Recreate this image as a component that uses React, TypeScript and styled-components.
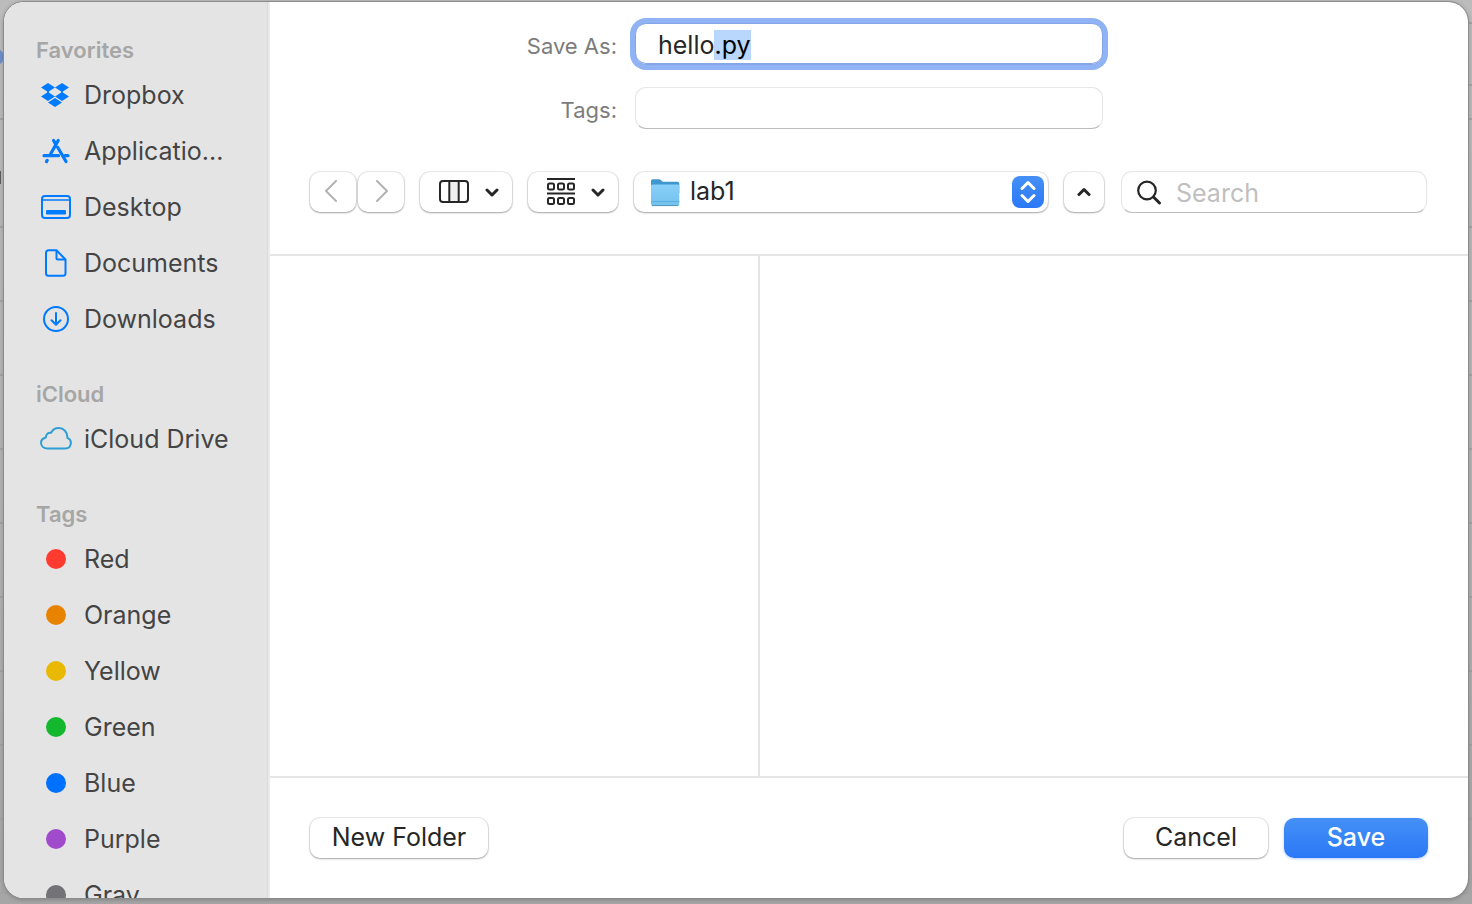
import React, { useEffect, useRef } from "react";
import styled, { createGlobalStyle, css } from "styled-components";

const GlobalStyle = createGlobalStyle`
  *, *::before, *::after { box-sizing: border-box; }
  body { margin: 0; font-family: Inter, "Liberation Sans", sans-serif; font-size: 25px; font-weight: 430; color: #262626; }
  button, input, select { font: inherit; color: inherit; }
`;

const Desktop = styled.div`
  height: 100vh;
  padding: 2px 4px 6px;
  position: relative;
  overflow: hidden;
  background:
    repeating-linear-gradient(to bottom, #a3a3a3 0 2px, transparent 2px 74px) 0 226px no-repeat,
    linear-gradient(#a3a3a3, #a3a3a3) 0 118px / 100% 2px no-repeat,
    linear-gradient(#a3a3a3, #a3a3a3) 100% 84px / 50% 2px no-repeat,
    linear-gradient(#a3a3a3, #a3a3a3) 100% 22px / 50% 2px no-repeat,
    linear-gradient(#5c5c5c, #5c5c5c) 0 171px / 1px 13px no-repeat,
    linear-gradient(to bottom, #bcbcbc, #b3b3b3 60%, #a6a6a6);
`;

const Badge = styled.span`
  position: absolute;
  left: -12px;
  top: 49px;
  width: 16px;
  height: 16px;
  border-radius: 50%;
  background: #6f8fc9;
`;

const Sheet = styled.main`
  position: relative;
  height: 100%;
  display: flex;
  overflow: hidden;
  border-radius: 20px;
  background: #fff;
  box-shadow: 0 0 0 1px #8c8c8c, 0 1px 5px rgba(0, 0, 0, 0.3);
`;

const Sidebar = styled.nav`
  flex: 0 0 266px;
  overflow: hidden;
  padding: 33px 16px 0 32px;
  background: #e4e4e4;
  border-right: 2px solid #ebebeb;
  box-shadow: inset -1px 0 0 #dadada;
`;

const Group = styled.section`
  margin-bottom: 32px;
`;

const GroupTitle = styled.h2`
  margin: 0;
  padding-bottom: 2px;
  font-size: 22px;
  line-height: 30px;
  font-weight: 600;
  color: #a6a6a6;
`;

const List = styled.ul`
  list-style: none;
  margin: 0;
  padding: 0;
`;

const Item = styled.a`
  display: flex;
  align-items: center;
  gap: 8px;
  height: 56px;
  color: #444;
  text-decoration: none;
  white-space: nowrap;
`;

const IconSlot = styled.span`
  flex: 0 0 40px;
  height: 32px;
  display: grid;
  place-items: center;
`;

const Dot = styled.i<{ $color: string }>`
  width: 20px;
  height: 20px;
  border-radius: 50%;
  background: ${(p) => p.$color};
`;

const Content = styled.form`
  flex: 1;
  min-width: 0;
  display: flex;
  flex-direction: column;
`;

const Fields = styled.div`
  display: grid;
  grid-template-columns: 347px 468px;
  column-gap: 18px;
  row-gap: 22px;
  align-items: center;
  padding-top: 21px;
`;

const Label = styled.label`
  padding-top: 4px;
  font-size: 22px;
  font-weight: 400;
  text-align: right;
  color: #7c7c7c;
`;

const raised = css`
  background: #fff;
  border: 0;
  border-radius: 10px;
  box-shadow: 0 0 0 1px rgba(0, 0, 0, 0.08), 0 1px 2px rgba(0, 0, 0, 0.3);
`;

const inset = css`
  border: 1px solid #e6e6e6;
  border-bottom-color: #bdbdbd;
  border-radius: 11px;
  background: #fff;
`;

const TextField = styled.input`
  ${inset}
  width: 100%;
  height: 42px;
  padding: 2px 22px 0;
  outline: none;
  caret-color: transparent;
  &::selection { background: #b9d6fd; color: #000; }
  &:focus {
    border-color: #84a6e6;
    box-shadow: 0 0 0 5px #90b3f5, inset 0 -1px 0 #84a6e6;
  }
`;

const Toolbar = styled.div`
  display: flex;
  align-items: center;
  padding: 42px 41px 41px 40px;
  border-bottom: 2px solid #e5e5e5;
`;

const ToolButton = styled.button<{ $width: number; $menu?: boolean; $after?: number }>`
  ${raised}
  flex: 0 0 ${(p) => p.$width}px;
  height: 40px;
  margin-right: ${(p) => p.$after ?? 16}px;
  padding: ${(p) => (p.$menu ? "0 0 0 6px" : "0")};
  display: flex;
  align-items: center;
  justify-content: center;
  gap: 16px;
`;

const Popup = styled.label`
  ${raised}
  flex: 1 1 414px;
  min-width: 0;
  height: 40px;
  margin-right: 16px;
  padding: 0 4px 0 16px;
  display: flex;
  align-items: center;
  gap: 10px;
`;

const PopupSelect = styled.select`
  flex: 1;
  min-width: 0;
  height: 40px;
  padding: 0 0 2px;
  border: 0;
  appearance: none;
  background: transparent;
`;

const Stepper = styled.span`
  flex: 0 0 32px;
  height: 32px;
  border-radius: 8px;
  background: linear-gradient(#4590f7, #2a78f6);
`;

const SearchBox = styled.label`
  ${inset}
  flex: 0 0 306px;
  min-width: 0;
  height: 42px;
  padding: 2px 14px 0;
  display: flex;
  align-items: center;
  gap: 14px;
`;

const SearchInput = styled.input`
  flex: 1;
  width: 0;
  min-width: 0;
  border: 0;
  padding: 0;
  outline: none;
  background: transparent;
  &::placeholder { color: #bfbfbf; opacity: 1; }
`;

const Columns = styled.div`
  flex: 1;
  display: grid;
  grid-template-columns: 490px 1fr;
`;

const Column = styled.div`
  &:first-child { border-right: 2px solid #e5e5e5; }
`;

const Footer = styled.footer`
  display: flex;
  gap: 16px;
  padding: 40px;
  border-top: 2px solid #e5e5e5;
`;

const ActionButton = styled.button<{ $width: number; $primary?: boolean; $push?: boolean }>`
  ${raised}
  width: ${(p) => p.$width}px;
  height: 40px;
  padding: 0 0 2px;
  ${(p) => p.$push && css`margin-right: auto;`}
  ${(p) => p.$primary && css`
    color: #fff;
    font-weight: 500;
    background: linear-gradient(#4590f7, #2a78f6);
    box-shadow: 0 1px 3px rgba(42, 120, 246, 0.35);
  `}
`;

const DropboxIcon = () => (
  <svg width="30" height="24" viewBox="0 0 30 24" fill="#007aff">
    <path d="M7 0l7 4.500-7 4.500-7-4.500zM21 0l7 4.500-7 4.500-7-4.500zM7 9l7 4.500-7 4.500-7-4.500zM21 9l7 4.500-7 4.500-7-4.500zM14 15l7 4.500-7 4.500-7-4.500z" />
    <path d="M6.200 7h1.600v4H6.200zM20.200 7h1.600v4h-1.600z" />
  </svg>
);

const AppsIcon = () => (
  <svg width="28" height="26" viewBox="0 0 28 26" fill="none" stroke="#007aff" strokeWidth="3.200" strokeLinecap="round">
    <path d="M16.200 2.500L8.600 16M11.600 2.500l1.800 3.100M15.800 9.500l8.200 14M2 17.700h14.500M23 17.700h3M5.200 22.400l-.700 1.200" />
  </svg>
);

const DesktopIcon = () => (
  <svg width="30" height="24" viewBox="0 0 30 24" fill="none" stroke="#007aff" strokeWidth="2">
    <rect x="1" y="1" width="28" height="22" rx="3" />
    <path d="M1 5h28" strokeWidth="1.600" />
    <rect x="5" y="15" width="20" height="4.500" rx="1" fill="#007aff" stroke="none" />
  </svg>
);

const DocumentIcon = () => (
  <svg width="22" height="28" viewBox="0 0 22 28" fill="none" stroke="#007aff" strokeWidth="2" strokeLinejoin="round">
    <path d="M3.500 1.300H11.500L20.500 10.500V24.200a2.500 2.500 0 0 1-2.500 2.500H3.500A2.500 2.500 0 0 1 1 24.200V3.800a2.500 2.500 0 0 1 2.500-2.500z" />
    <path d="M11.500 1.300V9a1.500 1.500 0 0 0 1.500 1.500h7.500" />
  </svg>
);

const DownloadIcon = () => (
  <svg width="28" height="28" viewBox="0 0 28 28" fill="none" stroke="#007aff" strokeWidth="2" strokeLinecap="round" strokeLinejoin="round">
    <circle cx="14" cy="14" r="12" />
    <path d="M14 8v11.500M9.500 15.200l4.500 4.500 4.500-4.500" />
  </svg>
);

const CloudIcon = () => (
  <svg width="32" height="24" viewBox="0 0 32 24" fill="none" stroke="#2e9fd4" strokeWidth="2" strokeLinejoin="round">
    <path d="M7.500 21.500H25.200a5.500 5.500 0 0 0 2.200-10.600C27.700 5 23.500 1 18.800 1c-3.600 0-6.300 1.900-7.700 4.800C8 5.200 6 7.500 5.800 10.500 3 11.300 1 13.300 1 15.800 1 19.200 3.900 21.500 7.500 21.500z" />
  </svg>
);

const NavChevron = ({ d }: { d: string }) => (
  <svg width="18" height="24" viewBox="0 0 18 24" fill="none" stroke="#b3b3b3" strokeWidth="2" strokeLinecap="round" strokeLinejoin="round">
    <path d={d} />
  </svg>
);

const SmallChevron = ({ up }: { up?: boolean }) => (
  <svg width="14" height="10" viewBox="0 0 14 10" fill="none" stroke="#262626" strokeWidth="3" strokeLinecap="round" strokeLinejoin="round">
    <path d={up ? "M2 7.500L7 2.500l5 5" : "M2 3l5 5 5-5"} />
  </svg>
);

const ColumnsIcon = () => (
  <svg width="30" height="24" viewBox="0 0 30 24" fill="none" stroke="#262626" strokeWidth="2">
    <rect x="10" y="1" width="10" height="21" fill="#f0f0f0" stroke="none" />
    <rect x="1" y="1" width="28" height="21" rx="3" />
    <path d="M10.300 1v21M19.700 1v21" />
  </svg>
);

const GroupIcon = () => (
  <svg width="28" height="28" viewBox="0 0 28 28" fill="none" stroke="#262626" strokeWidth="2">
    <path d="M0 1h28M0 15.500h28" />
    {[5.5, 20].map((y) =>
      [1, 11, 21].map((x) => <rect key={`${x}-${y}`} x={x} y={y} width="6" height="6" rx="1.500" />)
    )}
  </svg>
);

const FolderIcon = () => (
  <svg width="30" height="30" viewBox="0 0 30 30">
    <defs>
      <linearGradient id="front" x1="0" y1="0" x2="0" y2="1">
        <stop offset="0" stopColor="#87d0f8" />
        <stop offset="1" stopColor="#74c1ee" />
      </linearGradient>
    </defs>
    <path d="M1 4q0-1.800 1.800-1.800H9q1 0 1.800.800l1.400 1.300q.600.500 1.600.500H27.500Q29.300 4.800 29.300 6.600V16H1z" fill="#3e97cf" />
    <path d="M1 9q0-1.500 1.500-1.500h25.300q1.500 0 1.500 1.500v18q0 1.500-1.500 1.500H2.500Q1 28.500 1 27z" fill="url(#front)" />
    <path d="M1 24.500h28.300" stroke="#5aaede" strokeWidth="1" />
    <path d="M2 28.600h26.300" stroke="#4f93b8" strokeWidth="1" />
  </svg>
);

const SearchIcon = () => (
  <svg width="26" height="26" viewBox="0 0 26 26" fill="none" stroke="#262626" strokeLinecap="round">
    <circle cx="11" cy="10.500" r="8.800" strokeWidth="2.200" />
    <path d="M17.500 17l6 6" strokeWidth="3" />
  </svg>
);

const favorites = [
  { label: "Dropbox", icon: <DropboxIcon /> },
  { label: "Applicatio...", icon: <AppsIcon /> },
  { label: "Desktop", icon: <DesktopIcon /> },
  { label: "Documents", icon: <DocumentIcon /> },
  { label: "Downloads", icon: <DownloadIcon /> },
];

const tags = [
  { label: "Red", color: "#ff3b30" },
  { label: "Orange", color: "#e88300" },
  { label: "Yellow", color: "#e8b900" },
  { label: "Green", color: "#14b82e" },
  { label: "Blue", color: "#0070ff" },
  { label: "Purple", color: "#a04bcb" },
  { label: "Gray", color: "#727277" },
];

type Entry = { label: string; icon: React.ReactNode };

const SidebarGroup = ({ title, entries }: { title: string; entries: Entry[] }) => (
  <Group>
    <GroupTitle>{title}</GroupTitle>
    <List>
      {entries.map((e) => (
        <li key={e.label}>
          <Item href="#">
            <IconSlot>{e.icon}</IconSlot>
            {e.label}
          </Item>
        </li>
      ))}
    </List>
  </Group>
);

export default function App() {
  const nameRef = useRef<HTMLInputElement>(null);

  useEffect(() => {
    const input = nameRef.current;
    if (!input) return;
    input.focus();
    input.setSelectionRange(input.value.lastIndexOf("."), input.value.length);
  }, []);

  return (
    <>
      <GlobalStyle />
      <Desktop>
        <Badge />
        <Sheet>
          <Sidebar>
            <SidebarGroup title="Favorites" entries={favorites} />
            <SidebarGroup title="iCloud" entries={[{ label: "iCloud Drive", icon: <CloudIcon /> }]} />
            <SidebarGroup title="Tags" entries={tags.map((t) => ({ label: t.label, icon: <Dot $color={t.color} /> }))} />
          </Sidebar>
          <Content onSubmit={(e) => e.preventDefault()}>
            <Fields>
              <Label htmlFor="name">Save As:</Label>
              <TextField id="name" ref={nameRef} defaultValue="hello.py" spellCheck={false} autoComplete="off" />
              <Label htmlFor="tags">Tags:</Label>
              <TextField id="tags" />
            </Fields>
            <Toolbar>
              <ToolButton type="button" $width={46} $after={2} aria-label="Back">
                <NavChevron d="M12 1L2 11l10 10" />
              </ToolButton>
              <ToolButton type="button" $width={46} aria-label="Forward">
                <NavChevron d="M5 1l10 10L5 21" />
              </ToolButton>
              <ToolButton type="button" $width={92} $menu aria-label="Column view">
                <ColumnsIcon />
                <SmallChevron />
              </ToolButton>
              <ToolButton type="button" $width={90} $menu aria-label="Group items">
                <GroupIcon />
                <SmallChevron />
              </ToolButton>
              <Popup>
                <FolderIcon />
                <PopupSelect aria-label="Folder">
                  <option>lab1</option>
                </PopupSelect>
                <Stepper>
                  <svg width="32" height="32" viewBox="0 0 32 32" fill="none" stroke="#fff" strokeWidth="3" strokeLinecap="round" strokeLinejoin="round">
                    <path d="M10 12.500l6-6 6 6M10 19.500l6 6 6-6" />
                  </svg>
                </Stepper>
              </Popup>
              <ToolButton type="button" $width={40} $after={17} aria-label="Collapse">
                <SmallChevron up />
              </ToolButton>
              <SearchBox>
                <SearchIcon />
                <SearchInput type="text" placeholder="Search" aria-label="Search" />
              </SearchBox>
            </Toolbar>
            <Columns>
              <Column />
              <Column />
            </Columns>
            <Footer>
              <ActionButton type="button" $width={178} $push>New Folder</ActionButton>
              <ActionButton type="button" $width={144}>Cancel</ActionButton>
              <ActionButton type="submit" $width={144} $primary>Save</ActionButton>
            </Footer>
          </Content>
        </Sheet>
      </Desktop>
    </>
  );
}
